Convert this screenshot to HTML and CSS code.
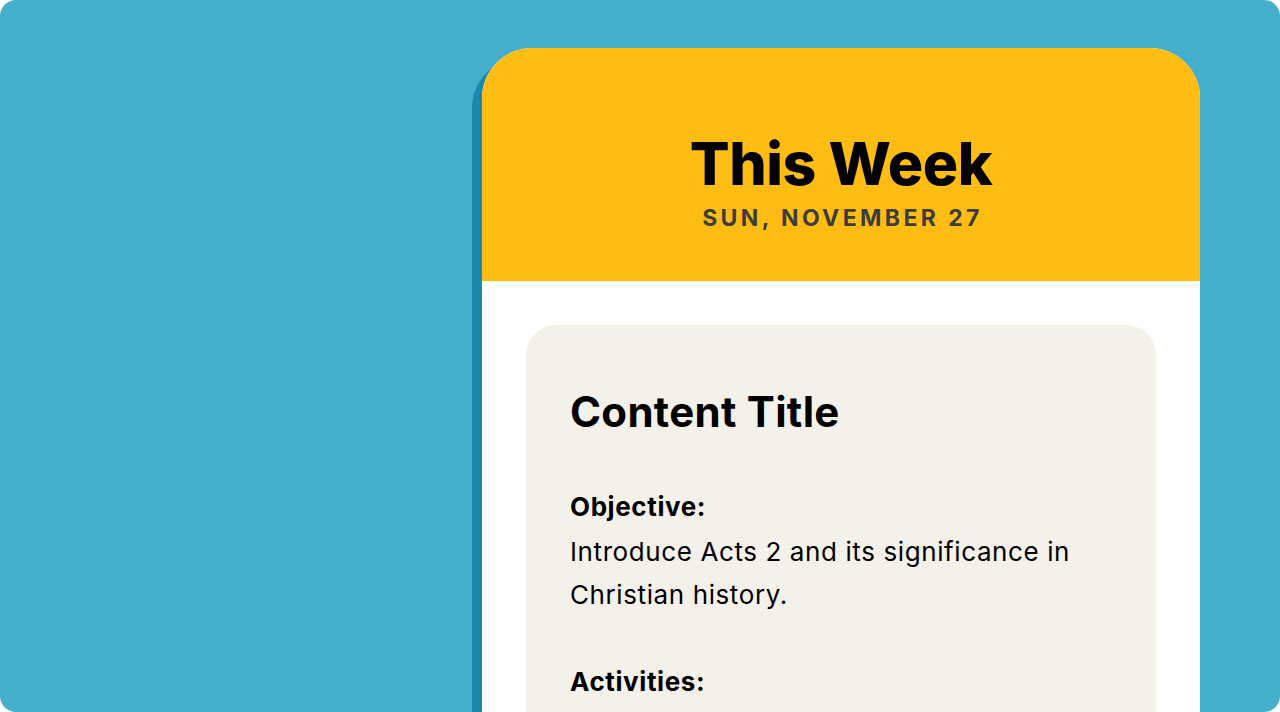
FILE: index.html
```html
<!DOCTYPE html>
<html>
<head>
<meta charset="utf-8">
<title>This Week</title>
<link rel="stylesheet" href="styles.css">
</head>
<body>

<div class="frame">
	<div class="phone">
		<div class="phone-header">
			<div class="title">This Week</div>
			<div class="date">SUN, NOVEMBER 27</div>
		</div>
		<div class="phone-body">
			<div class="card">
				<h2 class="card-title">Content Title</h2>

				<div class="section">
					<div class="label">Objective:</div>
					<p class="text">Introduce Acts 2 and its significance in Christian history.</p>
				</div>

				<div class="section">
					<div class="label">Activities:</div>
				</div>
			</div>
		</div>
	</div>
</div>

</body>
</html>
```

FILE: styles.css
```css
html, body {
	margin: 0;
	padding: 0;
	background: #ffffff;
}

body {
	font-family: Inter, "Noto Sans", sans-serif;
	color: #000;
}

.frame {
	width: 1280px;
	height: 712px;
	background: #45aecb;
	border-radius: 16px;
	overflow: hidden;
	padding-top: 48px;
	box-sizing: border-box;
}

.phone {
	margin-left: 482px;
	width: 718px;
	height: 800px;
	background: #ffffff;
	border-radius: 50px 50px 0 0;
	box-shadow: -10px 10px 0 #1f86ad;
	overflow: hidden;
}

.phone-header {
	height: 233px;
	box-sizing: border-box;
	padding-top: 86px;
	background: #ffbd14;
	text-align: center;
}

.title {
	font-size: 59px;
	line-height: 1;
	font-weight: 800;
	letter-spacing: -0.4px;
}

.date {
	margin-top: 14px;
	padding-left: 3px;
	font-size: 23px;
	line-height: 1;
	font-weight: 700;
	letter-spacing: 3.4px;
	color: #3d3d3f;
}

.phone-body {
	padding: 44px 44px 0 44px;
}

.card {
	background: #f4f1eb;
	border-radius: 30px;
	padding: 63px 44px 40px 44px;
	min-height: 600px;
}

.card-title {
	margin: 0 0 48px 0;
	font-size: 42px;
	line-height: 48px;
	font-weight: 700;
	letter-spacing: 0.3px;
}

.section {
	margin-bottom: 43px;
}

.label {
	font-size: 26px;
	line-height: 46px;
	font-weight: 700;
	letter-spacing: 0.6px;
}

.text {
	margin: 0;
	font-size: 26px;
	line-height: 43px;
	font-weight: 400;
	letter-spacing: 0.6px;
}
```
